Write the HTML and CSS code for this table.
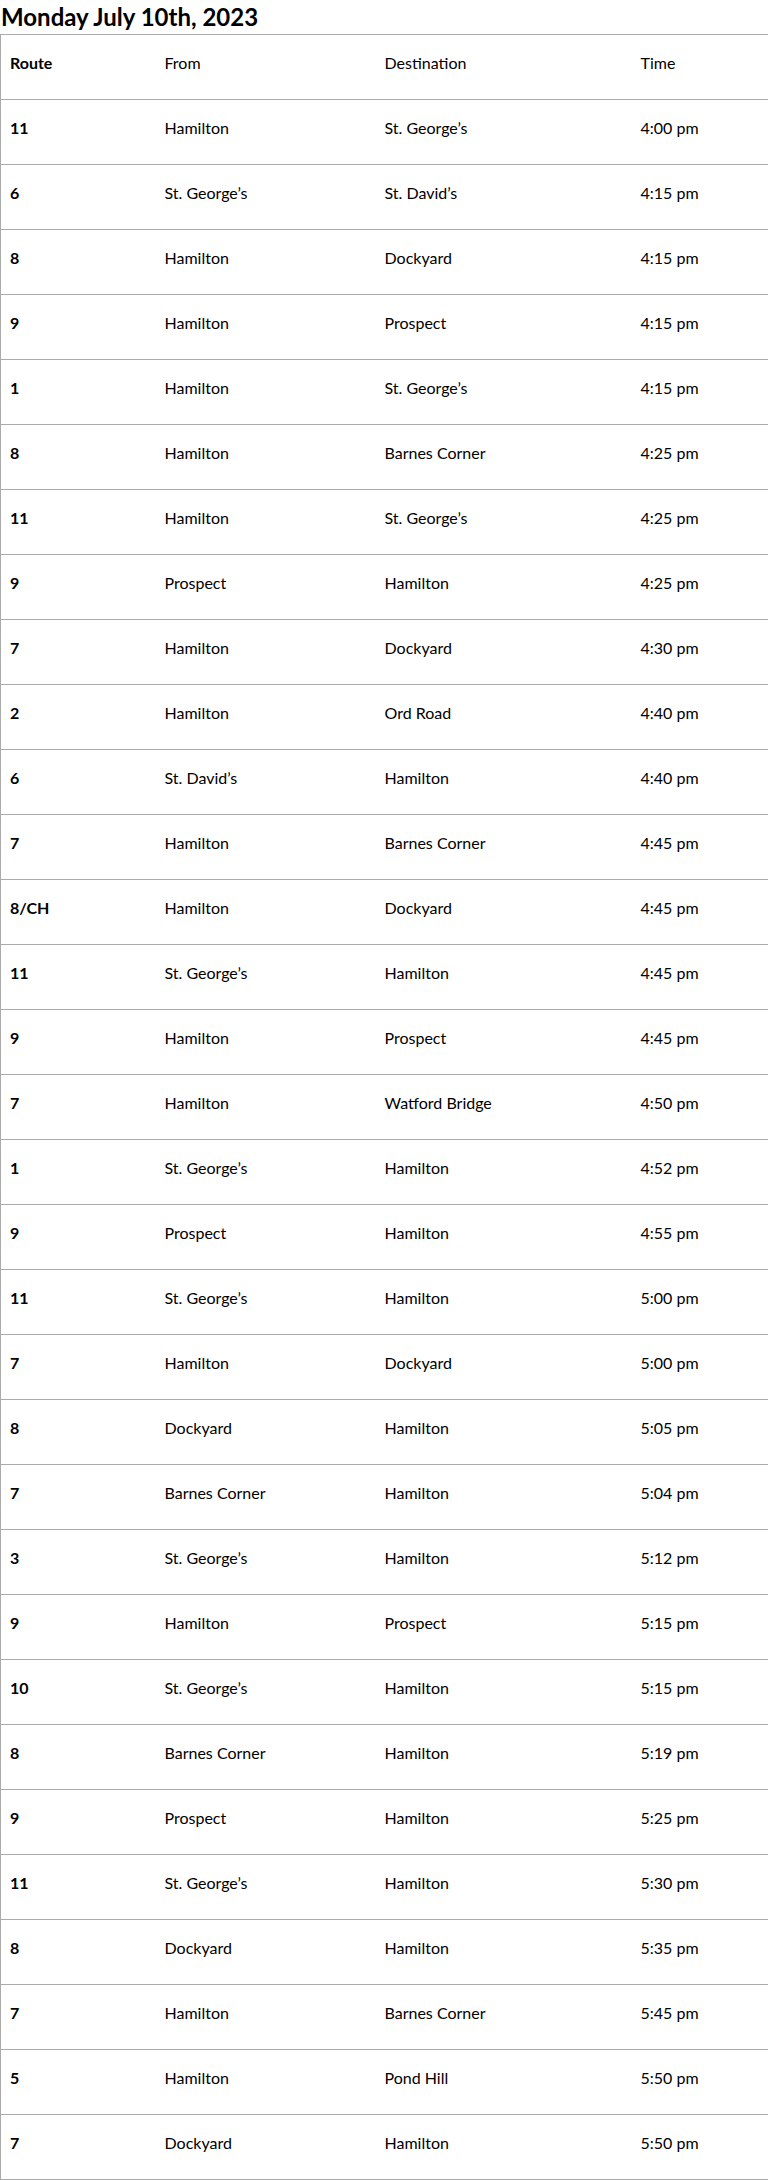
FILE: index.html
```html
<!DOCTYPE html>
<html>
<head>
<meta charset="utf-8">
<link rel="stylesheet" href="styles.css">
</head>
<body>
<h2 class="title">Monday July 10th, 2023</h2>
<table class="schedule">
<colgroup><col class="c1"><col class="c2"><col class="c3"><col class="c4"></colgroup>
<thead>
<tr><th class="route">Route</th><th>From</th><th>Destination</th><th>Time</th></tr>
</thead>
<tbody>
<tr><td class="route">11</td><td>Hamilton</td><td>St. George’s</td><td>4:00 pm</td></tr>
<tr><td class="route">6</td><td>St. George’s</td><td>St. David’s</td><td>4:15 pm</td></tr>
<tr><td class="route">8</td><td>Hamilton</td><td>Dockyard</td><td>4:15 pm</td></tr>
<tr><td class="route">9</td><td>Hamilton</td><td>Prospect</td><td>4:15 pm</td></tr>
<tr><td class="route">1</td><td>Hamilton</td><td>St. George’s</td><td>4:15 pm</td></tr>
<tr><td class="route">8</td><td>Hamilton</td><td>Barnes Corner</td><td>4:25 pm</td></tr>
<tr><td class="route">11</td><td>Hamilton</td><td>St. George’s</td><td>4:25 pm</td></tr>
<tr><td class="route">9</td><td>Prospect</td><td>Hamilton</td><td>4:25 pm</td></tr>
<tr><td class="route">7</td><td>Hamilton</td><td>Dockyard</td><td>4:30 pm</td></tr>
<tr><td class="route">2</td><td>Hamilton</td><td>Ord Road</td><td>4:40 pm</td></tr>
<tr><td class="route">6</td><td>St. David’s</td><td>Hamilton</td><td>4:40 pm</td></tr>
<tr><td class="route">7</td><td>Hamilton</td><td>Barnes Corner</td><td>4:45 pm</td></tr>
<tr><td class="route">8/CH</td><td>Hamilton</td><td>Dockyard</td><td>4:45 pm</td></tr>
<tr><td class="route">11</td><td>St. George’s</td><td>Hamilton</td><td>4:45 pm</td></tr>
<tr><td class="route">9</td><td>Hamilton</td><td>Prospect</td><td>4:45 pm</td></tr>
<tr><td class="route">7</td><td>Hamilton</td><td>Watford Bridge</td><td>4:50 pm</td></tr>
<tr><td class="route">1</td><td>St. George’s</td><td>Hamilton</td><td>4:52 pm</td></tr>
<tr><td class="route">9</td><td>Prospect</td><td>Hamilton</td><td>4:55 pm</td></tr>
<tr><td class="route">11</td><td>St. George’s</td><td>Hamilton</td><td>5:00 pm</td></tr>
<tr><td class="route">7</td><td>Hamilton</td><td>Dockyard</td><td>5:00 pm</td></tr>
<tr><td class="route">8</td><td>Dockyard</td><td>Hamilton</td><td>5:05 pm</td></tr>
<tr><td class="route">7</td><td>Barnes Corner</td><td>Hamilton</td><td>5:04 pm</td></tr>
<tr><td class="route">3</td><td>St. George’s</td><td>Hamilton</td><td>5:12 pm</td></tr>
<tr><td class="route">9</td><td>Hamilton</td><td>Prospect</td><td>5:15 pm</td></tr>
<tr><td class="route">10</td><td>St. George’s</td><td>Hamilton</td><td>5:15 pm</td></tr>
<tr><td class="route">8</td><td>Barnes Corner</td><td>Hamilton</td><td>5:19 pm</td></tr>
<tr><td class="route">9</td><td>Prospect</td><td>Hamilton</td><td>5:25 pm</td></tr>
<tr><td class="route">11</td><td>St. George’s</td><td>Hamilton</td><td>5:30 pm</td></tr>
<tr><td class="route">8</td><td>Dockyard</td><td>Hamilton</td><td>5:35 pm</td></tr>
<tr><td class="route">7</td><td>Hamilton</td><td>Barnes Corner</td><td>5:45 pm</td></tr>
<tr><td class="route">5</td><td>Hamilton</td><td>Pond Hill</td><td>5:50 pm</td></tr>
<tr><td class="route">7</td><td>Dockyard</td><td>Hamilton</td><td>5:50 pm</td></tr>
</tbody>
</table>
</body>
</html>
```

FILE: styles.css
```css
html, body {
  margin: 0;
  background: #fff;
  color: #000;
  font-family: Lato, "Open Sans", sans-serif;
  overflow-x: hidden;
}
.title {
  margin: 0;
  font-size: 24px;
  font-weight: 700;
  line-height: 34px;
  height: 34px;
  padding-left: 1px;
}
.schedule {
  width: 100%;
  border-collapse: collapse;
  table-layout: fixed;
  border: 1px solid #aaa;
  font-size: 16px;
}
.c1 { width: 155px; }
.c2 { width: 220px; }
.c3 { width: 256px; }
.c4 { width: 137px; }
.schedule th,
.schedule td {
  text-align: left;
  font-weight: 400;
  padding: 16px 9px 24px;
  border-bottom: 1px solid #aaa;
  vertical-align: top;
  line-height: 24px;
}
.schedule .route {
  font-weight: 700;
}
```
